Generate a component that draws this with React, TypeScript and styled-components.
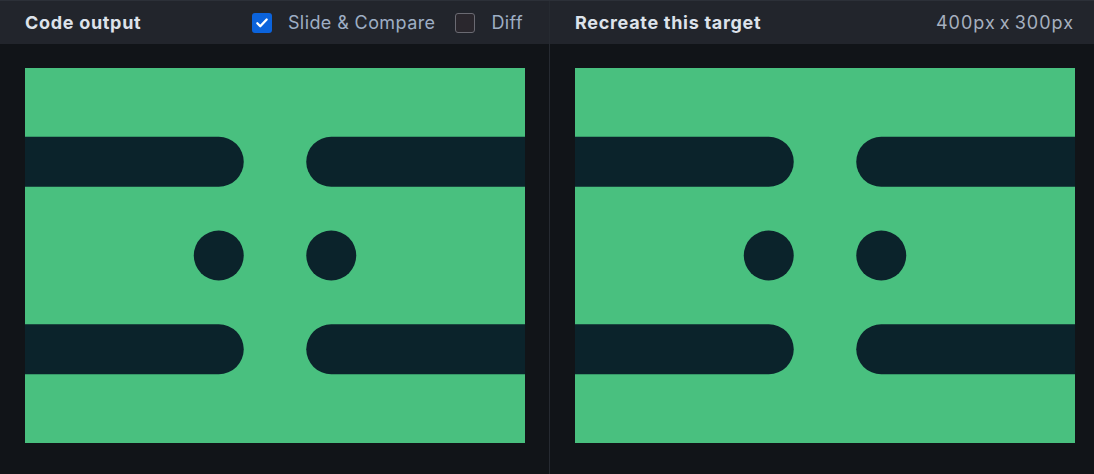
import React from "react";
import styled, { createGlobalStyle } from "styled-components";

const Global = createGlobalStyle`
  html, body { margin: 0; padding: 0; background: #111418; }
  body { font-family: Inter, "Noto Sans", sans-serif; }
`;

const Page = styled.div`
  display: grid;
  grid-template-columns: 550px 544px;
  width: 1094px;
  height: 474px;
  background: #111418;
  border-top: 1px solid #2c3038;
  box-sizing: border-box;
  overflow: hidden;
`;

const Panel = styled.section<{ $divider?: boolean }>`
  display: flex;
  flex-direction: column;
  min-width: 0;
  border-right: ${(p) => (p.$divider ? "1px solid #262a31" : "none")};
`;

const Header = styled.header<{ $right: number }>`
  height: 43px;
  background: #22252c;
  display: flex;
  align-items: center;
  justify-content: space-between;
  padding: 0 ${(p) => p.$right}px 0 25px;
`;

const Title = styled.h2`
  margin: 0;
  font-size: 18px;
  font-weight: 700;
  color: #dde2ea;
  letter-spacing: 0.7px;
`;

const Controls = styled.div`
  display: flex;
  align-items: center;
  gap: 20px;
`;

const Option = styled.label`
  display: flex;
  align-items: center;
  gap: 16px;
  font-size: 18px;
  color: #9eaec4;
  letter-spacing: 0.4px;
`;

const Box = styled.span<{ $checked?: boolean }>`
  width: 20px;
  height: 20px;
  box-sizing: border-box;
  border-radius: 3px;
  display: inline-flex;
  align-items: center;
  justify-content: center;
  background: ${(p) => (p.$checked ? "#0b63dc" : "#2a272d")};
  border: ${(p) => (p.$checked ? "none" : "1px solid #6a6a72")};
`;

const Meta = styled.span`
  font-size: 18px;
  color: #a6b0bf;
  letter-spacing: 1px;
  word-spacing: -2px;
`;

const Body = styled.div`
  padding: 24px 25px;
`;

const Canvas = styled.svg`
  display: block;
  width: 500px;
  height: 375px;
`;

const Art = () => (
  <Canvas viewBox="0 0 400 300">
    <rect width="400" height="300" fill="#49c07f" />
    <g fill="#0b232b">
      <path d="M0 55 H155 A20 20 0 0 1 155 95 H0 Z" />
      <path d="M400 55 H245 A20 20 0 0 0 245 95 H400 Z" />
      <path d="M0 205 H155 A20 20 0 0 1 155 245 H0 Z" />
      <path d="M400 205 H245 A20 20 0 0 0 245 245 H400 Z" />
      <circle cx="155" cy="150" r="20" />
      <circle cx="245" cy="150" r="20" />
    </g>
  </Canvas>
);

export default function App() {
  return (
    <>
      <Global />
      <Page>
        <Panel $divider>
          <Header $right={26}>
            <Title>Code output</Title>
            <Controls>
              <Option>
                <Box $checked>
                  <svg width="14" height="14" viewBox="0 0 24 24" fill="none" stroke="#fff" strokeWidth="4" strokeLinecap="round" strokeLinejoin="round">
                    <path d="M4 12.5l5 5L20 6" />
                  </svg>
                </Box>
                Slide &amp; Compare
              </Option>
              <Option>
                <Box />
                Diff
              </Option>
            </Controls>
          </Header>
          <Body>
            <Art />
          </Body>
        </Panel>
        <Panel>
          <Header $right={20}>
            <Title>Recreate this target</Title>
            <Meta>400px x 300px</Meta>
          </Header>
          <Body>
            <Art />
          </Body>
        </Panel>
      </Page>
    </>
  );
}
